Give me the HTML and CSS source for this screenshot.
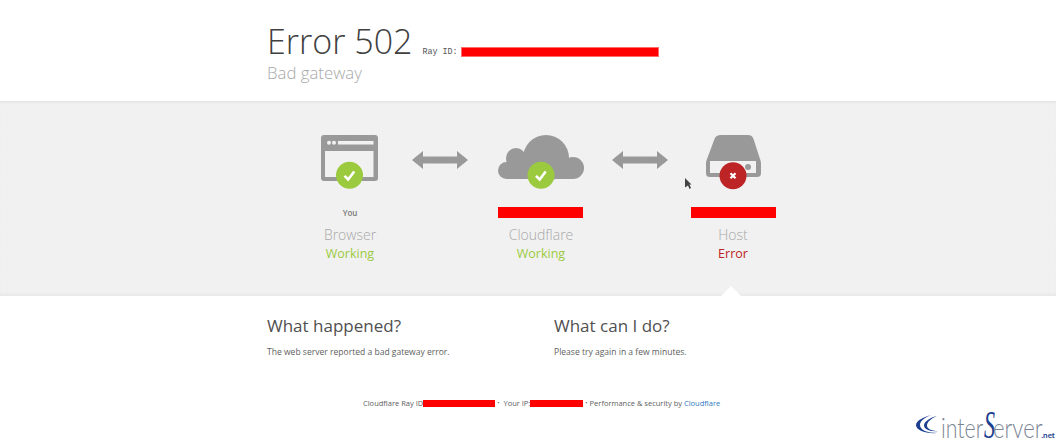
FILE: index.html
```html
<!DOCTYPE html>
<html lang="en">
<head>
<meta charset="utf-8">
<title>502: Bad gateway</title>
<link rel="stylesheet" href="styles.css">
</head>
<body>
<header class="top">
  <div class="title-row">
    <h1 class="code">Error 502</h1>
    <span class="ray">Ray ID: <span class="redact redact-ray"></span></span>
  </div>
  <h2 class="sub">Bad gateway</h2>
</header>
<section class="band">
  <div class="diagram">
    <div class="node">
      <svg class="icon" viewBox="0 0 90 60" width="90" height="60">
        <path fill="#999" fill-rule="evenodd" d="M19 2h51a3 3 0 0 1 3 3v40a3 3 0 0 1-3 3H19a3 3 0 0 1-3-3V5a3 3 0 0 1 3-3zM20 18v26h48.500V18zM33 8v3.500h35.500V8zM24 7.800a2 2 0 1 0 0 4a2 2 0 0 0 0-4zM29 7.800a2 2 0 1 0 0 4a2 2 0 0 0 0-4z"/>
        <circle cx="44.500" cy="42.300" r="13.500" fill="#9bca3e"/>
        <path d="M39.500 42.800l3.700 3.700l6-8" fill="none" stroke="#fff" stroke-width="2.600"/>
      </svg>
      <div class="note">You</div>
      <div class="name">Browser</div>
      <div class="status ok">Working</div>
    </div>
    <svg class="arrow arrow-one" viewBox="0 0 56 18" width="56" height="18"><path fill="#999" d="M0 9L11 0v5.500h34V0l11 9l-11 9v-5.500H11V18z"/></svg>
    <div class="node">
      <svg class="icon" viewBox="0 0 90 60" width="90" height="60">
        <g fill="#999">
          <circle cx="50" cy="25" r="23"/>
          <circle cx="20" cy="25" r="10"/>
          <circle cx="10.500" cy="37.500" r="8.500"/>
          <circle cx="77" cy="35" r="11"/>
          <rect x="10.500" y="25" width="66.500" height="21"/>
        </g>
        <circle cx="45" cy="42.300" r="13.500" fill="#9bca3e"/>
        <path d="M40 42.800l3.700 3.700l6-8" fill="none" stroke="#fff" stroke-width="2.600"/>
      </svg>
      <div class="note"><span class="redact redact-name redact-left"></span></div>
      <div class="name">Cloudflare</div>
      <div class="status ok">Working</div>
    </div>
    <svg class="arrow arrow-two" viewBox="0 0 56 18" width="56" height="18"><path fill="#999" d="M0 9L11 0v5.500h34V0l11 9l-11 9v-5.500H11V18z"/></svg>
    <div class="node">
      <svg class="icon" viewBox="0 0 90 60" width="90" height="60">
        <path fill="#999" fill-rule="evenodd" d="M33 2h27c3 0 4.500 1.500 5.500 4L72 26c.7 2 1 3 1 5v9c0 3-1.500 4-4 4H22c-2.500 0-4-1-4-4v-9c0-2 .3-3 1-5L26.500 6C27.500 3.500 29.500 2 33 2zM22 28v12h46V28zM60 31a3 3 0 1 0 0 6a3 3 0 0 0 0-6z"/>
        <circle cx="45" cy="42.700" r="13.500" fill="#bd2426"/>
        <path d="M42.500 40.200l5 5M47.500 40.200l-5 5" fill="none" stroke="#fff" stroke-width="2.200"/>
      </svg>
      <div class="note"><span class="redact redact-name redact-right"></span></div>
      <div class="name">Host</div>
      <div class="status bad">Error</div>
    </div>
  </div>
  <svg class="cursor" viewBox="0 0 7 11" width="7" height="11"><path fill="#444" d="M0 0l6.500 6.500H4.500l1.500 3.500l-1.500 1l-1.500-3.500L0 9.500z"/></svg>
</section>
<span class="notch"></span>
<section class="info">
  <div class="col">
    <h3 class="col-title">What happened?</h3>
    <p class="col-text">The web server reported a bad gateway error.</p>
  </div>
  <div class="col">
    <h3 class="col-title">What can I do?</h3>
    <p class="col-text">Please try again in a few minutes.</p>
  </div>
</section>
<footer class="foot">
  <span>Cloudflare Ray ID</span><span class="redact redact-foot-ray"></span><span class="dot">•</span>
  <span class="foot-ip">Your IP:</span><span class="redact redact-foot-ip"></span><span class="dot">•</span>
  <span class="foot-perf">Performance &amp; security by <a class="link" href="#">Cloudflare</a></span>
</footer>
<div class="logo">
  <svg class="logo-c" viewBox="0 0 25 22" width="25" height="22">
    <path d="M16 1C7 3 0 7 0 11c0 5 9 9 22 8C11 19 4 16 4 11C4 7 9 3 16 1z" fill="#1c3f8f"/>
    <path d="M21 2C13 4 8 8 8 11.500c0 3.500 6 6.500 14 5.500C15 17 11 14.500 11 11.500C11 8 15 4.500 21 2z" fill="#1c3f8f"/>
  </svg>
  <span class="logo-word logo-inter">inter</span><span class="logo-s">S</span><span class="logo-word logo-erver">erver</span><span class="logo-net">.net</span>
</div>
</body>
</html>
```
FILE: styles.css
```css
* { box-sizing: border-box; }
html, body { margin: 0; padding: 0; }
body {
  position: relative;
  width: 1056px;
  height: 442px;
  overflow: hidden;
  background: #fff;
  font-family: "Open Sans", "Liberation Sans", sans-serif;
  color: #404040;
}
.top { height: 101px; padding: 19px 0 0 267px; }
.title-row { display: flex; align-items: baseline; gap: 10px; }
.code { margin: 0; font-size: 34px; line-height: 44px; font-weight: 300; color: #404040; }
.ray { font-family: "Liberation Mono", monospace; font-size: 8.400px; color: #555; display: inline-flex; align-items: center; }
.sub { margin: 0; font-size: 16.800px; line-height: 20px; font-weight: 300; color: #a8a8a8; }
.redact { display: inline-block; background: #f00; }
.redact-ray { width: 198px; height: 10px; margin-left: 3px; border: 1px solid #ff6a6a; }
.band {
  position: relative;
  height: 195px;
  background-color: #f1f1f1;
  background-image: repeating-conic-gradient(#f0f0f0 0 25%, #f2f2f2 0 50%);
  background-size: 3px 3px;
  box-shadow: inset 0 3px 3px -2px #e0e0e0, inset 0 -4px 3px -2px #e8e8e8;
}
.diagram { display: flex; align-items: flex-start; padding: 32px 0 0 305px; }
.node { width: 90px; display: flex; flex-direction: column; align-items: center; }
.icon { display: block; }
.note { height: 20px; margin-top: 9px; display: flex; align-items: center; justify-content: center; font-size: 8px; font-weight: 600; color: #777; white-space: nowrap; }
.redact-name { width: 85px; height: 11px; }
.redact-left { margin-right: 1px; }
.redact-right { margin-left: 1px; }
.name { margin-top: 4px; font-size: 14px; line-height: 18px; font-weight: 300; color: #a8a8a8; }
.status { margin-top: 1px; font-size: 12.500px; line-height: 18px; }
.ok { color: #9bca3e; }
.bad { color: #bd2426; }
.arrow { flex: none; margin-top: 18px; }
.arrow-one { margin-left: 17px; margin-right: 28px; }
.arrow-two { margin-left: 26px; margin-right: 20px; }
.cursor { position: absolute; left: 685px; top: 77px; }
.notch {
  position: absolute;
  left: 720px;
  top: 286px;
  width: 0;
  height: 0;
  border-left: 11px solid transparent;
  border-right: 11px solid transparent;
  border-bottom: 11px solid #fff;
}
.info { display: grid; grid-template-columns: 287px 287px; padding: 19px 0 0 267px; }
.col-title { margin: 0; font-size: 17px; line-height: 22px; font-weight: 400; color: #505050; }
.col-text { margin: 8px 0 0; font-size: 8.550px; line-height: 14px; color: #606060; }
.foot { position: absolute; left: 0; right: 0; top: 397px; display: flex; align-items: center; padding-left: 363px; height: 12px; font-size: 7.500px; color: #606060; white-space: nowrap; }
.redact-foot-ray { width: 72px; height: 7px; }
.redact-foot-ip { width: 53px; height: 7px; }
.dot { margin: 0 0 0 2px; font-size: 6px; }
.foot-ip { margin-left: 4px; }
.foot-perf { margin-left: 2px; }
.link { color: #2f7bbf; text-decoration: none; }
.logo { position: absolute; left: 916px; top: 408px; height: 34px; width: 140px; display: flex; align-items: baseline; font-family: "Lato", sans-serif; font-weight: 300; font-size: 28px; line-height: 34px; color: #7a8494; white-space: nowrap; }
.logo-c { flex: none; align-self: flex-start; margin-top: 6px; }
.logo-word { display: inline-block; transform-origin: left center; }
.logo-inter { transform: scaleX(.76); margin-right: -13px; }
.logo-erver { transform: scaleX(.79); margin-right: -14px; }
.logo-s { display: inline-block; margin-right: -11px; color: #1c3f8f; font-family: "Liberation Serif", serif; font-style: italic; font-weight: 400; font-size: 40px; line-height: 34px; transform: scaleX(.55); transform-origin: left center; }
.logo-net { flex: none; color: #1c3f8f; font-size: 8px; font-weight: 700; }
```
